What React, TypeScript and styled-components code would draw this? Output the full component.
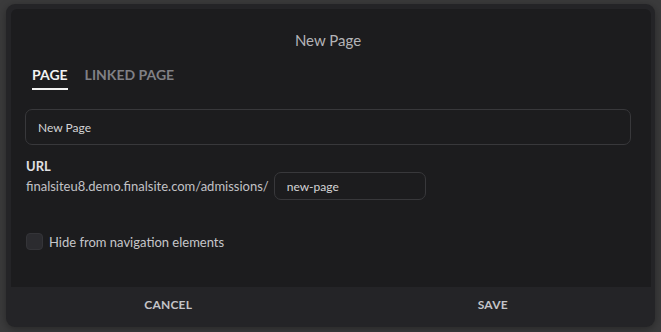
import React, { useState } from 'react'
import styled, { createGlobalStyle } from 'styled-components'

const GlobalStyle = createGlobalStyle`
  html, body {
    margin: 0;
    padding: 0;
    background: #3b3b3c;
    font-family: Lato, 'Open Sans', sans-serif;
    overflow: hidden;
  }
`

const Backdrop = styled.div`
  width: 661px;
  height: 332px;
  padding: 4px 6px 0 6px;
  box-sizing: border-box;
`

const Modal = styled.div`
  width: 649px;
  height: 323px;
  background: #242427;
  border-radius: 9px;
  display: flex;
  flex-direction: column;
  overflow: hidden;
  box-shadow: 0 2px 8px rgba(0, 0, 0, 0.35);
`

const Body = styled.div`
  flex: 1;
  margin: 5px 4px 0 5px;
  background: #1c1c1e;
  border-radius: 6px 6px 0 0;
  padding: 0 20px 0 14px;
  display: flex;
  flex-direction: column;
`

const Title = styled.div`
  text-align: center;
  color: #b4b4b8;
  font-size: 15px;
  margin-top: 22px;
  line-height: 18px;
`

const Tabs = styled.div`
  display: flex;
  gap: 17px;
  margin: 17px 0 0 7px;
`

const Tab = styled.div<{ $active?: boolean }>`
  font-size: 14px;
  font-weight: 700;
  line-height: 18px;
  padding-bottom: 4px;
  color: ${(p) => (p.$active ? '#f2f2f2' : '#808085')};
  border-bottom: 2px solid ${(p) => (p.$active ? '#f2f2f2' : 'transparent')};
  cursor: pointer;
`

const Field = styled.input<{ $width?: number }>`
  box-sizing: border-box;
  width: ${(p) => (p.$width ? `${p.$width}px` : '100%')};
  height: ${(p) => (p.$width ? '28px' : '36px')};
  background: transparent;
  border: 1px solid #38383b;
  border-radius: 7px;
  color: #d4d4d6;
  font-family: Lato, sans-serif;
  font-size: 12px;
  padding: 0 12px;
  outline: none;
`

const TitleField = styled.div`
  margin-top: 19px;
`

const UrlLabel = styled.div`
  margin: 13px 0 0 1px;
  color: #e0e0e2;
  font-size: 13px;
  font-weight: 700;
  line-height: 16px;
`

const UrlRow = styled.div`
  display: flex;
  align-items: center;
  gap: 5px;
  margin: -2px 0 0 1px;
`

const Prefix = styled.span`
  color: #c2c2c6;
  font-size: 13px;
`

const CheckRow = styled.label`
  display: flex;
  align-items: center;
  gap: 6px;
  margin: 33px 0 0 1px;
  cursor: pointer;
`

const Box = styled.span<{ $checked: boolean }>`
  width: 17px;
  height: 17px;
  box-sizing: border-box;
  border-radius: 4px;
  background: ${(p) => (p.$checked ? '#5a5a60' : '#2b2b2f')};
  border: 1px solid #343438;
`

const CheckText = styled.span`
  color: #c6c6ca;
  font-size: 13px;
`

const Footer = styled.div`
  height: 40px;
  padding-bottom: 6px;
  box-sizing: border-box;
  display: flex;
`

const FooterButton = styled.button`
  flex: 1;
  background: transparent;
  border: none;
  color: #c4c4c8;
  font-family: Lato, sans-serif;
  font-size: 12px;
  font-weight: 700;
  letter-spacing: 0.2px;
  cursor: pointer;
`

export default function App() {
  const [tab, setTab] = useState('page')
  const [title, setTitle] = useState('New Page')
  const [slug, setSlug] = useState('new-page')
  const [hidden, setHidden] = useState(false)

  return (
    <>
      <GlobalStyle />
      <Backdrop>
        <Modal>
          <Body>
            <Title>New Page</Title>
            <Tabs>
              <Tab $active={tab === 'page'} onClick={() => setTab('page')}>
                PAGE
              </Tab>
              <Tab $active={tab === 'linked'} onClick={() => setTab('linked')}>
                LINKED PAGE
              </Tab>
            </Tabs>
            <TitleField>
              <Field value={title} onChange={(e) => setTitle(e.target.value)} />
            </TitleField>
            <UrlLabel>URL</UrlLabel>
            <UrlRow>
              <Prefix>finalsiteu8.demo.finalsite.com/admissions/</Prefix>
              <Field $width={152} value={slug} onChange={(e) => setSlug(e.target.value)} />
            </UrlRow>
            <CheckRow onClick={() => setHidden(!hidden)}>
              <Box $checked={hidden} />
              <CheckText>Hide from navigation elements</CheckText>
            </CheckRow>
          </Body>
          <Footer>
            <FooterButton>CANCEL</FooterButton>
            <FooterButton>SAVE</FooterButton>
          </Footer>
        </Modal>
      </Backdrop>
    </>
  )
}
